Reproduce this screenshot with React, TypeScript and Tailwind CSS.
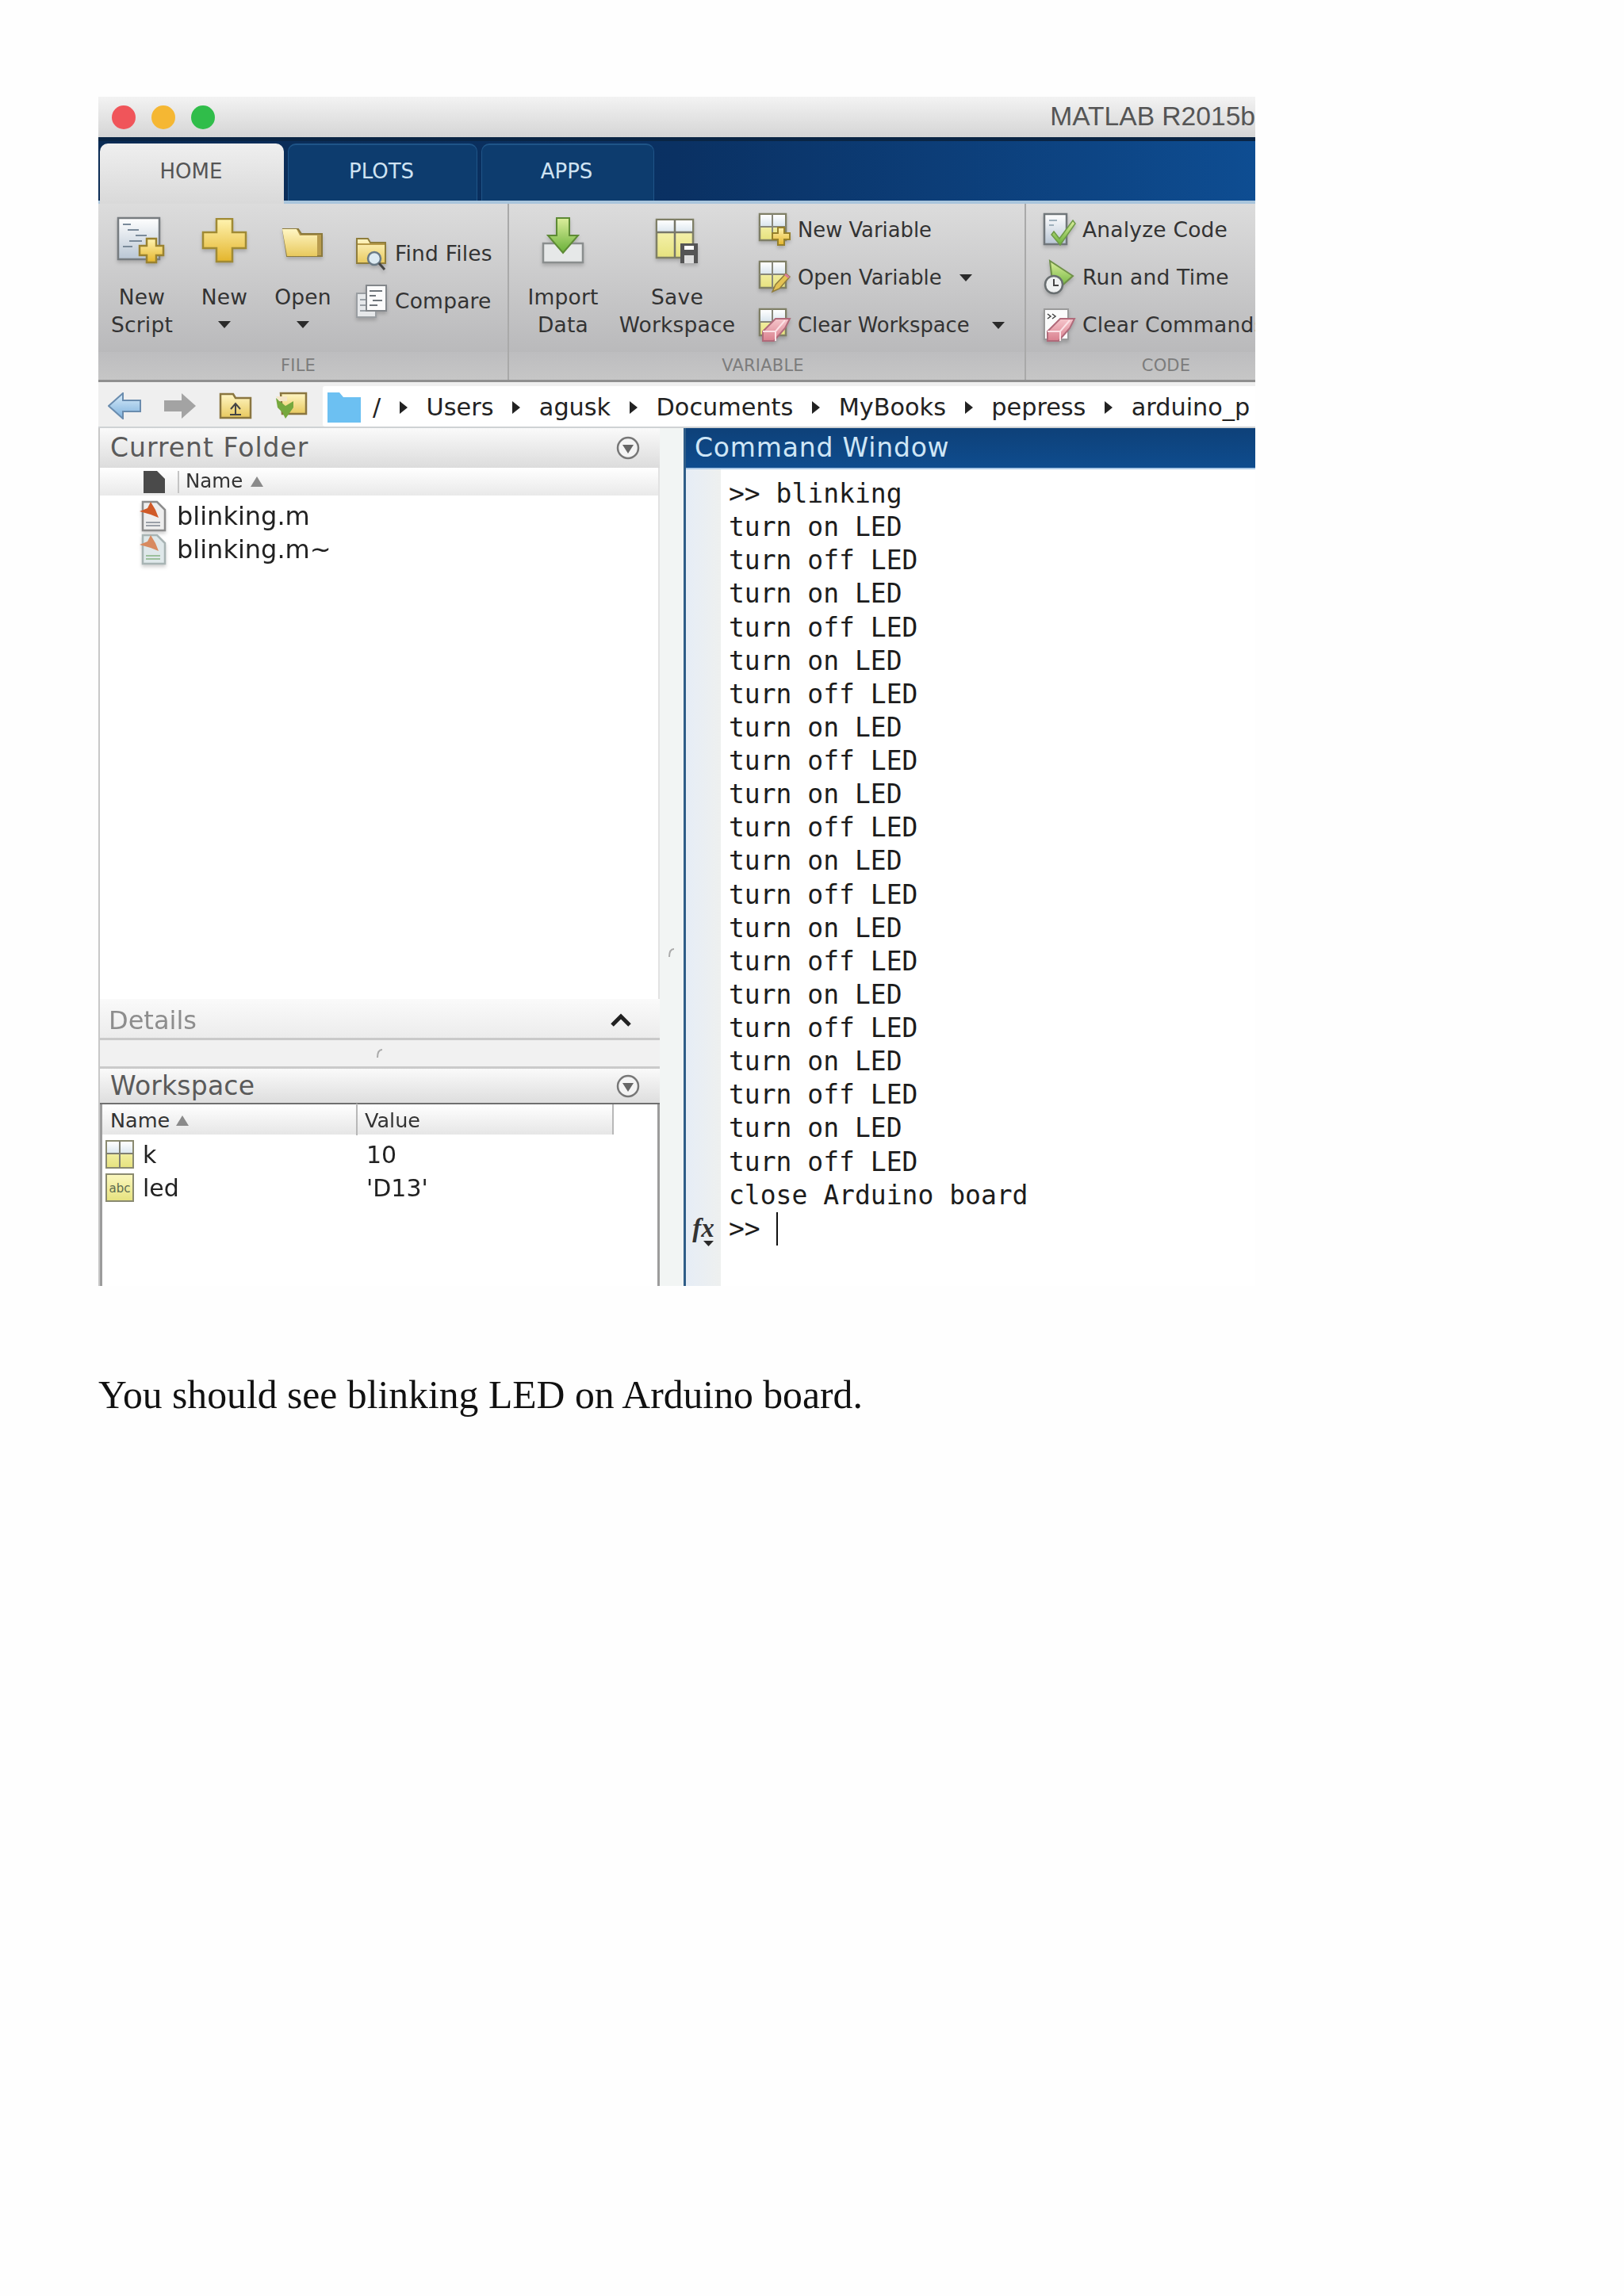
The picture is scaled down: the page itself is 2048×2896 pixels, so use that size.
import React from "react";

const plus = (cx: number, cy: number, r: number, a: number) =>
  `M${cx - a} ${cy - r}H${cx + a}V${cy - a}H${cx + r}V${cy + a}H${cx + a}V${cy + r}H${cx - a}V${cy + a}H${cx - r}V${cy - a}H${cx - a}Z`;

function Defs() {
  const g = (id: string, a: string, b: string, h = false) => (
    <linearGradient id={id} x1="0" y1="0" x2={h ? "1" : "0"} y2={h ? "0" : "1"}>
      <stop offset="0" stopColor={a} />
      <stop offset="1" stopColor={b} />
    </linearGradient>
  );
  return (
    <svg className="absolute w-0 h-0">
      <defs>
        {g("gGold", "#fff3b0", "#e4b52c")}
        {g("gPaper", "#ffffff", "#b9c6d4")}
        {g("gFolder", "#fff6c4", "#e8c95e")}
        {g("gGreen", "#dcee9c", "#68b038")}
        {g("gPink", "#f6c6cc", "#d9808e")}
        {g("gCell", "#fbf8c0", "#e6e27e")}
        {g("gCellTop", "#ffffff", "#dbe6ee")}
        {g("gNav", "#d8ecfa", "#7db0dc")}
      </defs>
    </svg>
  );
}

const Ico = ({ w, h, children }: { w: number; h: number; children: React.ReactNode }) => (
  <svg width={w} height={h} viewBox={`0 0 ${w} ${h}`} className="block shrink-0 drop-shadow-[0_3px_2px_rgba(0,0,0,0.18)]">
    {children}
  </svg>
);

const ScriptIcon = () => (
  <Ico w={64} h={60}>
    <rect x="2" y="2" width="52" height="52" fill="url(#gPaper)" stroke="#777c80" strokeWidth="2.5" />
    <path d="M8 10h10M14 17h14M24 24h14M16 31h16M8 38h12" stroke="#7a8a9a" strokeWidth="2" />
    <path d={plus(44, 43, 15, 6)} fill="url(#gGold)" stroke="#9a8230" strokeWidth="2.5" />
  </Ico>
);
const PlusIcon = () => (
  <Ico w={58} h={62}>
    <path d={plus(29, 28, 27, 10)} fill="url(#gGold)" stroke="#a08a34" strokeWidth="2.5" />
  </Ico>
);
const FolderBig = () => (
  <Ico w={56} h={44}>
    <path d="M3 2H22L26 8H52V36H8Z" fill="#b99c4e" stroke="#8c7a3c" strokeWidth="2" />
    <path d="M2 2H20L24 10H46V36H8Z" fill="url(#gFolder)" />
  </Ico>
);
const FindIcon = () => (
  <Ico w={42} h={44}>
    <path d="M2 3H16L19 8H38V34H2Z" fill="url(#gFolder)" stroke="#8f7d3c" strokeWidth="2" />
    <path d="M3 10H37" stroke="#b79a48" strokeWidth="2" />
    <circle cx="24" cy="28" r="8" fill="#dceaf2" stroke="#6a7a86" strokeWidth="2.5" />
    <path d="M30 34L37 42" stroke="#444" strokeWidth="3" />
  </Ico>
);
const CompareIcon = () => (
  <Ico w={42} h={44}>
    <rect x="2" y="12" width="24" height="30" fill="#e6e8ea" stroke="#9a9ea2" strokeWidth="2" />
    <path d="M6 20h14M6 27h14M6 34h14" stroke="#9aa0a6" strokeWidth="2" />
    <rect x="14" y="2" width="25" height="32" fill="#fbfbfb" stroke="#83878b" strokeWidth="2" />
    <path d="M18 9h16M18 15h8M22 21h12M18 27h10" stroke="#6e747a" strokeWidth="2" />
  </Ico>
);
const ImportIcon = () => (
  <Ico w={56} h={62}>
    <path d="M3 34H53V58H3Z" fill="#e6e8e8" stroke="#8a8e8e" strokeWidth="2.5" />
    <path d="M20 2H36V24H47L28 46L9 24H20Z" fill="url(#gGreen)" stroke="#5d8a34" strokeWidth="2" />
  </Ico>
);
const SaveIcon = () => (
  <Ico w={56} h={58}>
    <rect x="2" y="2" width="46" height="48" fill="url(#gCell)" stroke="#7f7f66" strokeWidth="2.5" />
    <rect x="3" y="3" width="44" height="15" fill="url(#gCellTop)" />
    <path d="M25 2V50M2 18H48" stroke="#77776a" strokeWidth="2.5" />
    <rect x="32" y="32" width="22" height="25" fill="#555" />
    <rect x="37" y="35" width="12" height="5" fill="#fff" />
    <rect x="37" y="47" width="12" height="10" fill="#ddd" />
  </Ico>
);
const Grid = () => (
  <>
    <rect x="2" y="2" width="33" height="33" fill="url(#gCell)" stroke="#7f7f66" strokeWidth="2.5" />
    <rect x="3" y="3" width="31" height="14" fill="url(#gCellTop)" />
    <path d="M18 2V35M2 18H35" stroke="#87877a" strokeWidth="2" />
  </>
);
const NewVarIcon = () => (
  <Ico w={42} h={44}>
    <Grid />
    <path d={plus(29, 30, 11, 4)} fill="url(#gGold)" stroke="#96802c" strokeWidth="2" />
  </Ico>
);
const OpenVarIcon = () => (
  <Ico w={42} h={44}>
    <Grid />
    <path d="M18 40L22 31L35 17L40 21L27 36Z" fill="#e4c254" stroke="#8f7c3c" strokeWidth="1.5" />
    <path d="M35 17L40 21L38 23L33 19Z" fill="#d77b9a" />
  </Ico>
);
const Eraser = () => (
  <>
    <path d="M6 30L22 14H40L34 26L20 42H6Z" fill="url(#gPink)" stroke="#b06a7a" strokeWidth="2" />
    <path d="M6 30H22L34 16M22 30V42" stroke="#fbe2e6" strokeWidth="2" fill="none" />
  </>
);
const ClearVarIcon = () => (
  <Ico w={42} h={44}>
    <Grid />
    <Eraser />
  </Ico>
);
const AnalyzeIcon = () => (
  <Ico w={42} h={44}>
    <rect x="2" y="2" width="28" height="38" fill="url(#gPaper)" stroke="#70767a" strokeWidth="2.5" />
    <path d="M8 10h10M8 16h6" stroke="#9fb0bc" strokeWidth="2" />
    <path d="M14 24L21 33L38 10L41 14L22 41L11 28Z" fill="url(#gGreen)" stroke="#6e9a48" strokeWidth="1.5" />
  </Ico>
);
const RunTimeIcon = () => (
  <Ico w={42} h={46}>
    <path d="M9 2L38 21L20 37L12 27Z" fill="url(#gGreen)" stroke="#6f9048" strokeWidth="2" />
    <circle cx="14" cy="32" r="11" fill="#eef0f0" stroke="#686e70" strokeWidth="2.5" />
    <path d="M14 25V33H20" stroke="#444" strokeWidth="2" fill="none" />
  </Ico>
);
const ClearCmdIcon = () => (
  <Ico w={42} h={44}>
    <rect x="2" y="2" width="30" height="38" fill="#fbfbfb" stroke="#9a9a9a" strokeWidth="2" />
    <path d="M6 8l4 3-4 3M12 8l4 3-4 3" stroke="#444" strokeWidth="1.5" fill="none" />
    <Eraser />
  </Ico>
);

const Tri = ({ w = 16, h = 9, c = "#2a2a2a" }: { w?: number; h?: number; c?: string }) => (
  <svg width={w} height={h} viewBox="0 0 16 9" preserveAspectRatio="none" className="block shrink-0">
    <path d="M0 0H16L8 9Z" fill={c} />
  </svg>
);
const TriUp = () => (
  <svg width="16" height="13" viewBox="0 0 16 13" className="block shrink-0">
    <path d="M8 0L16 13H0Z" fill="#8a8a8a" />
  </svg>
);
const Crumb = () => (
  <svg width="10" height="16" viewBox="0 0 10 16" className="block shrink-0">
    <path d="M0 0L10 8L0 16Z" fill="#222" />
  </svg>
);
const MenuDot = () => (
  <svg width="30" height="32" viewBox="0 0 30 32" className="block shrink-0">
    <circle cx="15" cy="16" r="13" fill="#f4f4f4" stroke="#777" strokeWidth="2.5" />
    <path d="M8 12H22L15 23Z" fill="#666" />
  </svg>
);
const SplitDot = () => (
  <svg width="10" height="14" viewBox="0 0 10 14" className="block">
    <path d="M8 2C3 2 2 6 2 12" stroke="#aaa" strokeWidth="2" fill="none" />
  </svg>
);

const FileIcon = ({ faded }: { faded?: boolean }) => (
  <Ico w={36} h={40}>
    <path d="M6 2H24L34 12V38H6Z" fill={faded ? "#dfe8ea" : "#eeeeee"} stroke={faded ? "#a8b4b4" : "#8c8c8c"} strokeWidth="2.5" />
    <path d="M2 14L12 10L16 2L22 12L26 22L16 18Z" fill={faded ? "#d88a60" : "#d05a28"} />
    <path d="M10 28h18M10 32h18" stroke={faded ? "#9cc09c" : "#9aa0a8"} strokeWidth="2" />
  </Ico>
);

const LargeBtn = ({ w, icon, pt, lines, arrow }: { w: string; icon: React.ReactNode; pt: string; lines: string[]; arrow?: boolean }) => (
  <div className={`${w} flex flex-col items-center shrink-0`}>
    <div className="h-[100px] w-full flex justify-center items-start">
      <div className={pt}>{icon}</div>
    </div>
    {lines.map((l) => (
      <div key={l} className="h-[35px] leading-[35px] whitespace-nowrap">{l}</div>
    ))}
    {arrow && (
      <div className="h-[35px] flex items-center">
        <Tri />
      </div>
    )}
  </div>
);

const SmallBtn = ({ icon, label, arrow, arrowGap }: { icon: React.ReactNode; label: string; arrow?: boolean; arrowGap?: string }) => (
  <div className="h-[60px] flex items-center gap-[8px] whitespace-nowrap">
    <div className="w-[42px] shrink-0">{icon}</div>
    <span>{label}</span>
    {arrow && (
      <div className={arrowGap}>
        <Tri />
      </div>
    )}
  </div>
);

const GroupLabel = ({ t, cls }: { t: string; cls: string }) => (
  <div className={`h-[35px] flex items-center justify-center text-[21px] text-[#7c7c7c] bg-gradient-to-b from-[#bdbdbf] to-[#c6c6c6] ${cls}`}>{t}</div>
);

const path = ["Users", "agusk", "Documents", "MyBooks", "pepress", "arduino_p"];

const log: string[] = [">> blinking"];
for (let i = 0; i < 10; i++) log.push("turn on LED", "turn off LED");
log.push("close Arduino board");

export default function App() {
  return (
    <div className="w-[2048px] h-[2896px] bg-[#fefefe] pt-[122px] pl-[124px] relative overflow-hidden">
      <Defs />
      <div className="w-[1459px] h-[1500px] overflow-hidden flex flex-col font-['DejaVu_Sans',sans-serif] blur-[0.6px]">
        {/* title bar */}
        <div className="h-[51px] shrink-0 flex items-center justify-between pl-[17px] bg-gradient-to-b from-[#f3f3f3] to-[#d5d5d5]">
          <div className="flex gap-[20px]">
            <div className="w-[30px] h-[30px] rounded-full bg-[#f0555a]" />
            <div className="w-[30px] h-[30px] rounded-full bg-[#f5b733]" />
            <div className="w-[30px] h-[30px] rounded-full bg-[#30bd4a]" />
          </div>
          <div className="font-['Liberation_Sans',sans-serif] text-[33.6px] text-[#555] whitespace-nowrap">MATLAB R2015b</div>
        </div>
        {/* tabs */}
        <div className="h-[80px] shrink-0 flex items-end pl-[2px] gap-[5px] bg-gradient-to-r from-[#0a2b54] via-[#0a3163] to-[#0e4d92] border-t-[5px] border-t-[#0a2544]">
          <div className="relative z-10 w-[232px] h-[76px] -mb-[4px] rounded-t-[10px] bg-gradient-to-b from-[#efefef] to-[#d9d9d9] flex items-center justify-center pr-[2px] pb-[6px] text-[26px] text-[#555]">HOME</div>
          <div className="w-[239px] h-[72px] rounded-t-[10px] bg-[#0d3c6e] border-t-2 border-x border-[#1f5588] flex items-center justify-center pb-[3px] pr-[3px] text-[26px] text-[#cfe3f2]">PLOTS</div>
          <div className="w-[218px] h-[72px] rounded-t-[10px] bg-[#0d3c6e] border-t-2 border-x border-[#1f5588] flex items-center justify-center pb-[3px] pr-[3px] text-[26px] text-[#cfe3f2]">APPS</div>
        </div>
        {/* ribbon */}
        <div className="h-[229px] shrink-0 flex border-t-[4px] border-t-[#a9c5dc] border-b-[3px] border-b-[#8f8f8f] text-[26.5px] tracking-[0.2px] text-[#333] bg-gradient-to-b from-[#dcdcdc] to-[#b3b3b5]">
          <div className="w-[518px] shrink-0 flex flex-col border-r-2 border-r-[#a9a9a9]">
            <div className="h-[187px] flex">
              <LargeBtn w="w-[110px]" pt="pt-[16px]" icon={<ScriptIcon />} lines={["New", "Script"]} />
              <LargeBtn w="w-[98px]" pt="pt-[18px]" icon={<PlusIcon />} lines={["New"]} arrow />
              <LargeBtn w="w-[100px]" pt="pt-[30px]" icon={<FolderBig />} lines={["Open"]} arrow />
              <div className="ml-[16px] pt-[33px] flex flex-col">
                <SmallBtn icon={<FindIcon />} label="Find Files" />
                <SmallBtn icon={<CompareIcon />} label="Compare" />
              </div>
            </div>
            <GroupLabel t="FILE" cls="pr-[12px]" />
          </div>
          <div className="w-[652px] shrink-0 flex flex-col border-r-2 border-r-[#a9a9a9]">
            <div className="h-[187px] flex">
              <LargeBtn w="w-[136px]" pt="pt-[16px]" icon={<ImportIcon />} lines={["Import", "Data"]} />
              <LargeBtn w="w-[152px]" pt="pt-[18px]" icon={<SaveIcon />} lines={["Save", "Workspace"]} />
              <div className="ml-[26px] pt-[3px] flex flex-col text-[25.8px] tracking-normal">
                <SmallBtn icon={<NewVarIcon />} label="New Variable" />
                <SmallBtn icon={<OpenVarIcon />} label="Open Variable" arrow arrowGap="ml-[14px]" />
                <SmallBtn icon={<ClearVarIcon />} label="Clear Workspace" arrow arrowGap="ml-[20px]" />
              </div>
            </div>
            <GroupLabel t="VARIABLE" cls="pr-[10px]" />
          </div>
          <div className="flex-1 min-w-0 flex flex-col overflow-hidden">
            <div className="h-[187px] pl-[21px] pt-[3px] flex flex-col">
              <SmallBtn icon={<AnalyzeIcon />} label="Analyze Code" />
              <SmallBtn icon={<RunTimeIcon />} label="Run and Time" />
              <SmallBtn icon={<ClearCmdIcon />} label="Clear Commands" />
            </div>
            <GroupLabel t="CODE" cls="pl-[64px]" />
          </div>
        </div>
        {/* path bar */}
        <div className="h-[58px] shrink-0 flex bg-[#efefef] border-b-[2px] border-b-[#cfd2d4] pt-[5px] pl-[12px]">
          <div className="w-[271px] shrink-0 flex items-center gap-[28px] pb-[2px]">
            <svg width="42" height="34" viewBox="0 0 42 34" className="block shrink-0"><path d="M1 17L19 1V10H41V24H19V33Z" fill="url(#gNav)" stroke="#6a8cae" strokeWidth="2" /></svg>
            <svg width="42" height="34" viewBox="0 0 42 34" className="block shrink-0"><path d="M41 17L23 1V10H1V24H23V33Z" fill="#a3a3a3" /></svg>
            <svg width="42" height="34" viewBox="0 0 42 34" className="block shrink-0"><path d="M2 2H18L21 7H40V32H2Z" fill="url(#gFolder)" stroke="#8a7640" strokeWidth="2.5" /><path d="M21 14V27M15 21L21 14L27 21M14 28H28" stroke="#444" strokeWidth="2" fill="none" /></svg>
            <svg width="42" height="36" viewBox="0 0 42 36" className="block shrink-0"><path d="M8 2H40V28H10Z" fill="url(#gFolder)" stroke="#8a7640" strokeWidth="2.5" /><path d="M2 8L14 18L24 12V20L14 34L10 26L4 20Z" fill="#76a83e" /><path d="M2 6H16V12H6Z" fill="#f5e6c8" /></svg>
          </div>
          <div className="flex-1 h-[51px] bg-white rounded-l-[3px] flex items-center pl-[6px] pt-[2px] text-[30.3px] text-[#222] whitespace-nowrap overflow-hidden">
            <svg width="42" height="38" viewBox="0 0 42 38" className="block shrink-0 mr-[15px]"><path d="M0 0H15L20 6H42V38H0Z" fill="#6cc0f2" /></svg>
            <span>/</span>
            {path.map((p) => (
              <React.Fragment key={p}>
                <span className="mx-[23.7px]"><Crumb /></span>
                <span>{p}</span>
              </React.Fragment>
            ))}
          </div>
        </div>
        {/* main */}
        <div className="flex-1 min-h-0 flex">
          {/* left column */}
          <div className="w-[708px] shrink-0 flex flex-col border-l-2 border-l-[#c8c8c8]">
            <div className="h-[50px] shrink-0 flex items-center justify-between pl-[13px] pr-[25px] text-[33px] tracking-[1px] text-[#5a5a5a] bg-gradient-to-b from-[#fafafa] to-[#dcdcdc]">
              <span>Current Folder</span>
              <MenuDot />
            </div>
            <div className="flex-1 min-h-0 bg-white border-r-2 border-r-[#e2e2e2] flex flex-col">
              <div className="h-[35px] shrink-0 flex items-center pl-[55px] text-[24.5px] text-[#333] bg-gradient-to-b from-white to-[#e9e9e9]">
                <svg width="27" height="28" viewBox="0 0 27 28" className="block shrink-0"><path d="M0 0H17L27 10V28H0Z" fill="#4a4a4a" /></svg>
                <div className="w-[2px] h-[28px] bg-[#c4c4c4] ml-[16px] mr-[8px]" />
                <span>Name</span>
                <span className="ml-[10px]"><TriUp /></span>
              </div>
              <div className="pt-[5px] text-[32px] text-[#222]">
                {["blinking.m", "blinking.m~"].map((f, i) => (
                  <div key={f} className="h-[42px] leading-[42px] flex items-center pl-[48px]">
                    <FileIcon faded={i === 1} />
                    <span className="ml-[13px]">{f}</span>
                  </div>
                ))}
              </div>
            </div>
            <div className="h-[52px] shrink-0 flex items-center justify-between pl-[11px] pr-[35px] pt-[5px] text-[32px] text-[#8d8d8d] bg-gradient-to-b from-[#fafafa] to-[#ececec] border-b-[3px] border-b-[#c9c9c9]">
              <span>Details</span>
              <svg width="28" height="18" viewBox="0 0 28 18" className="block"><path d="M3 15L14 4L25 15" stroke="#222" strokeWidth="5" fill="none" /></svg>
            </div>
            <div className="h-[33px] shrink-0 bg-[#f1f1f1] flex items-center justify-center"><SplitDot /></div>
            <div className="h-[48px] shrink-0 flex items-center justify-between pl-[13px] pr-[25px] text-[33px] tracking-[0.2px] text-[#5a5a5a] bg-gradient-to-b from-[#fafafa] to-[#dedede] border-t-[3px] border-t-[#cacaca] border-b-[2px] border-b-[#6f6f6f]">
              <span>Workspace</span>
              <MenuDot />
            </div>
            <div className="h-[229px] shrink-0 bg-white border-x-[3px] border-x-[#9c9c9c] text-[30px] text-[#222]">
              <div className="w-[645px] h-[38px] flex items-center text-[25.5px] text-[#333] bg-gradient-to-b from-white to-[#e6e6e6] border-r-2 border-r-[#b8b8b8]">
                <div className="w-[322px] flex items-center pl-[10px] pt-[2px] border-r-2 border-r-[#b8b8b8]">
                  <span>Name</span>
                  <span className="ml-[8px]"><TriUp /></span>
                </div>
                <span className="pl-[9px] pt-[2px]">Value</span>
              </div>
              <div className="pt-[4px]">
                <div className="h-[42px] flex items-center">
                  <div className="w-[333px] flex items-center pl-[4px]">
                    <svg width="36" height="36" viewBox="0 0 36 36" className="block shrink-0"><rect x="1" y="1" width="34" height="34" fill="url(#gCell)" stroke="#8a8a70" strokeWidth="2" /><rect x="2" y="2" width="32" height="15" fill="url(#gCellTop)" /><path d="M18 1V35M1 17H35" stroke="#7f7f72" strokeWidth="2" /></svg>
                    <span className="ml-[11px]">k</span>
                  </div>
                  <span>10</span>
                </div>
                <div className="h-[42px] flex items-center">
                  <div className="w-[333px] flex items-center pl-[4px]">
                    <svg width="36" height="36" viewBox="0 0 36 36" className="block shrink-0">
                      <rect x="1" y="1" width="34" height="34" fill="url(#gCell)" stroke="#8a8a70" strokeWidth="2" />
                      <text x="18" y="24" textAnchor="middle" fontSize="15" fill="#5c6a50" fontFamily="DejaVu Sans">abc</text>
                    </svg>
                    <span className="ml-[11px]">led</span>
                  </div>
                  <span>'D13'</span>
                </div>
              </div>
            </div>
          </div>
          {/* splitter */}
          <div className="w-[30px] shrink-0 bg-[#f2f5f4] flex justify-center pt-[655px]"><SplitDot /></div>
          {/* command window */}
          <div className="flex-1 min-w-0 flex flex-col border-l-[3px] border-l-[#2f5d88]">
            <div className="h-[52px] shrink-0 flex items-center pl-[11px] text-[33px] tracking-[0.8px] text-[#cfe6f6] bg-gradient-to-b from-[#0e4179] to-[#0e4c8e] border-b-[2px] border-b-[#a9c8e6] whitespace-nowrap">Command Window</div>
            <div className="flex-1 min-h-0 flex bg-white">
              <div className="w-[44px] shrink-0 bg-gradient-to-r from-[#e6edf6] to-[#eef0ef] flex flex-col items-center justify-end pb-[50px]">
                <span className="font-['Liberation_Serif',serif] italic font-bold text-[33px] leading-[32px] text-[#333]">fx</span>
                <span className="pl-[12px]"><Tri w={13} h={7} /></span>
              </div>
              <div className="pl-[10px] pt-[10px] font-['DejaVu_Sans_Mono',monospace] text-[33px] leading-[42.14px] text-[#1c1c1c] whitespace-pre">
                {log.map((l, i) => (
                  <div key={i} className="h-[42.14px]">{l}</div>
                ))}
                <div className="h-[42.14px] flex items-center">
                  <span>{">> "}</span>
                  <span className="w-[2px] h-[42px] bg-[#111]" />
                </div>
              </div>
            </div>
          </div>
        </div>
      </div>
      <p className="mt-[109px] font-['Liberation_Serif',serif] text-[49.7px] leading-[58px] text-[#111] whitespace-nowrap">You should see blinking LED on Arduino board.</p>
    </div>
  );
}
